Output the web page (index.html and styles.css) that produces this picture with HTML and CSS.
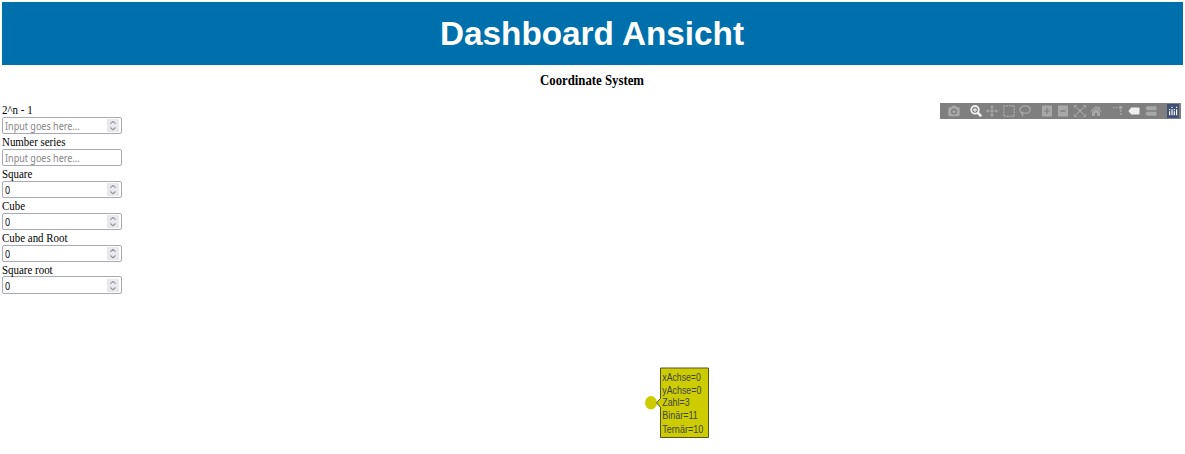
FILE: index.html
```
<!DOCTYPE html>
<html lang="de">
<head>
<meta charset="utf-8">
<title>Dashboard Ansicht</title>
<link rel="stylesheet" href="styles.css">
</head>
<body>
<header class="banner"><h1>Dashboard Ansicht</h1></header>
<h2 class="subtitle">Coordinate System</h2>
<main class="layout">
  <form class="inputs">
    <label class="field"><span class="name">2^n - 1</span><span class="box"><input placeholder="Input goes here..."><svg class="spin" viewBox="0 0 12 13"><path d="M3.5 4.7 6 2.4l2.5 2.3M3.5 8.5 6 10.8l2.5-2.3"/></svg></span></label>
    <label class="field"><span class="name">Number series</span><span class="box"><input placeholder="Input goes here..."></span></label>
    <label class="field"><span class="name">Square</span><span class="box"><input value="0"><svg class="spin" viewBox="0 0 12 13"><path d="M3.5 4.7 6 2.4l2.5 2.3M3.5 8.5 6 10.8l2.5-2.3"/></svg></span></label>
    <label class="field"><span class="name">Cube</span><span class="box"><input value="0"><svg class="spin" viewBox="0 0 12 13"><path d="M3.5 4.7 6 2.4l2.5 2.3M3.5 8.5 6 10.8l2.5-2.3"/></svg></span></label>
    <label class="field"><span class="name">Cube and Root</span><span class="box"><input value="0"><svg class="spin" viewBox="0 0 12 13"><path d="M3.5 4.7 6 2.4l2.5 2.3M3.5 8.5 6 10.8l2.5-2.3"/></svg></span></label>
    <label class="field"><span class="name">Square root</span><span class="box"><input value="0"><svg class="spin" viewBox="0 0 12 13"><path d="M3.5 4.7 6 2.4l2.5 2.3M3.5 8.5 6 10.8l2.5-2.3"/></svg></span></label>
  </form>
  <section class="plot">
    <div class="modebar">
      <div class="group">
        <svg viewBox="0 0 12 12"><path fill-rule="evenodd" d="M1.3 2.3h2L4 .8h4l.7 1.5h2q1 0 1 1v6.9q0 1-1 1H1.3q-1 0-1-1V3.3q0-1 1-1zM6 3.6a3 3 0 1 0 0 6 3 3 0 0 0 0-6zm0 1.3a1.7 1.7 0 1 1 0 3.4 1.7 1.7 0 0 1 0-3.4z"/></svg>
      </div>
      <div class="group">
        <svg class="active" viewBox="0 0 12 12"><circle class="line" cx="5" cy="4.8" r="3.8" stroke-width="1.9"/><path class="line" stroke-width="2.5" stroke-linecap="round" d="m8 8 2.5 2.5"/><path d="M4.4 2.9h1.2v1.4H7v1.2H5.6v1.4H4.4V5.5H3V4.3h1.4z"/></svg>
        <svg viewBox="0 0 12 12"><path d="m6 0 2 2.5H6.6v2.9h2.9V4L12 6 9.5 8V6.6H6.6v2.9H8L6 12 4 9.5h1.4V6.6H2.5V8L0 6l2.5-2v1.4h2.9V2.5H4z"/></svg>
        <svg viewBox="0 0 12 12"><path class="line" stroke-width="1.4" stroke-dasharray="1.7 1" d="M.7.7h10.6v10.6H.7z"/></svg>
        <svg viewBox="0 0 12 12"><path class="line" stroke-width="1.3" d="M3.1 8C-.5 6.2.4 1 6 .9c6.5 0 6.8 7 .5 7.4-1.6 0-2.6-1.6-3.6-1-1.1.8-.1 2 1 1.3M3.3 8.5c1.1.8.7 1.7-.2 2.9"/></svg>
      </div>
      <div class="group">
        <svg viewBox="0 0 12 12"><path fill-rule="evenodd" d="M1 .5h10v11H1zM5.4 3v2.4H3v1.2h2.4V9h1.2V6.6H9V5.4H6.6V3z"/></svg>
        <svg viewBox="0 0 12 12"><path fill-rule="evenodd" d="M1 .5h10v11H1zM3.5 5.2v1.6h5V5.2z"/></svg>
        <svg viewBox="0 0 12 12"><path class="line" stroke-width="1.2" d="M.7 3V.7H3M9 .7h2.3V3M.7 9v2.3H3m6 0h2.3V9M2.6 2.6l6.8 6.8m0-6.8L2.6 9.4"/></svg>
        <svg viewBox="0 0 12 12"><path d="M6 1 .5 6.1l.7.8L6 2.6l4.8 4.3.7-.8L9.7 4.4V1.7H8.2V3zM6 3.5 2 7.2V11h3V8h2v3h3V7.2z"/></svg>
      </div>
      <div class="group">
        <svg viewBox="0 0 12 12"><path d="M1 1.9h1.7v1.4H1zm2.7 0h1.7v1.4H3.7zM7.2 1h3v3h-3zM8 5h1.5v1.8H8zm0 3h1.5v1.8H8z"/></svg>
        <svg class="active" viewBox="0 0 12 12"><path d="M3.2 2.5h7.5q.8 0 .8.8v5.4q0 .8-.8.8H3.2L.4 6z"/></svg>
        <svg viewBox="0 0 12 12"><path d="M2 1.2h9.5v4H2L.5 3.2zm0 5.6h9.5v4H2L.5 8.8z"/></svg>
      </div>
      <div class="group">
        <svg class="logo" viewBox="0 0 12 14"><path class="tile" d="M0 0h12v14H0z"/><path d="M2 7.3h1.2v4H2zm2.4-2h1.2v6H4.4zm2.3 2h1.2v4H6.7zm2.3-2h1.2v6H9zM2 5h1.2v1.2H2zm2.4-2.2h1.2V4H4.4zM6.7 5h1.2v1.2H6.7zM9 2.8h1.2V4H9z"/></svg>
      </div>
    </div>
    <svg class="hover" width="70" height="76" viewBox="642 365 70 76">
      <ellipse class="marker" cx="651" cy="402.7" rx="6" ry="6.8"/>
      <path class="callout" d="M660.5 368h48v69.5h-48v-30.2l-4-4.5 4-4.5z"/>
      <g class="tip">
        <text x="662.3" y="380.9" textLength="38.5" lengthAdjust="spacingAndGlyphs">xAchse=0</text>
        <text x="662.3" y="393.8" textLength="39" lengthAdjust="spacingAndGlyphs">yAchse=0</text>
        <text x="662.3" y="406.4" textLength="27.3" lengthAdjust="spacingAndGlyphs">Zahl=3</text>
        <text x="662.3" y="419.4" textLength="35.5" lengthAdjust="spacingAndGlyphs">Binär=11</text>
        <text x="662.3" y="432.5" textLength="41" lengthAdjust="spacingAndGlyphs">Ternär=10</text>
      </g>
    </svg>
  </section>
</main>
</body>
</html>
```
FILE: styles.css
```
* { box-sizing: border-box; }
body {
  margin: 0;
  padding: 2px;
  height: 454px;
  overflow: hidden;
  background: #fff;
  color: #000;
  font-family: "Liberation Serif", serif;
}
.banner {
  height: 63px;
  background: #0070ad;
  color: #fff;
  text-align: center;
}
.banner h1 {
  margin: 0;
  padding-right: 1px;
  font: bold 33.3px/63px "Liberation Sans", sans-serif;
}
.subtitle {
  margin: 6px 0 0;
  padding-right: 1px;
  font-size: 13.6px;
  line-height: 20px;
  text-align: center;
  transform: scaleX(.94);
}
.layout {
  display: flex;
  justify-content: space-between;
  padding-top: 12.4px;
}
.inputs { width: 120px; }
.field {
  display: block;
  height: 31.9px;
  white-space: nowrap;
}
.name {
  display: block;
  height: 13.6px;
  font-size: 12px;
  line-height: 14px;
  transform: scaleX(.91);
  transform-origin: left;
}
.box {
  display: flex;
  align-items: center;
  justify-content: space-between;
  width: 120px;
  height: 17.4px;
  padding: 0 2px;
  border: 1px solid #a9a9b4;
  border-radius: 2px;
  background: #fff;
}
.box input {
  width: 100px;
  height: 15px;
  padding: 0;
  border: 0;
  outline: 0;
  background: none;
  color: #111;
  font: 11px/15px "Noto Sans", sans-serif;
  transform: scaleX(.82);
  transform-origin: left;
}
.box input::placeholder { color: #858585; opacity: 1; }
.spin { width: 12px; height: 13px; background: #e9e9ed; }
.spin path { fill: none; stroke: #8e8e96; stroke-width: 1.1; }
.plot { position: relative; width: 1061px; height: 350px; }
.modebar {
  display: flex;
  justify-content: flex-end;
  gap: 5.5px;
  width: 241px;
  height: 16px;
  margin: 0 2px 0 auto;
  padding-right: 2.3px;
  background: #7f7f7f;
}
.group { display: flex; align-items: center; gap: 4.4px; }
.group + .group { padding-left: 4.4px; }
.group svg { width: 12px; height: 12px; fill: #a8a8a8; stroke: none; }
.group svg .line { fill: none; stroke: #a8a8a8; }
.group .active { fill: #efefef; }
.group .active .line { stroke: #efefef; }
.group .logo { height: 14px; fill: #fff; }
.group .tile { fill: #3f4f75; }
.hover { position: absolute; left: 520px; top: 261.6px; }
.marker { fill: #cccc00; }
.callout { fill: #cccc00; stroke: #55552b; stroke-width: 1; }
.tip { fill: #444; font: 10.3px "Liberation Sans", sans-serif; }
```
